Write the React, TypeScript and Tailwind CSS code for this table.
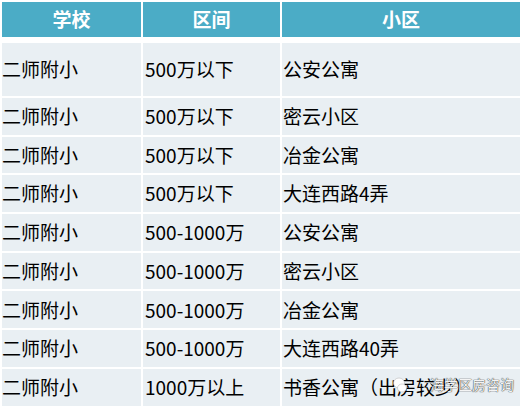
const rows: [string, string, string][] = [
  ["二师附小", "500万以下", "公安公寓"],
  ["二师附小", "500万以下", "密云小区"],
  ["二师附小", "500万以下", "冶金公寓"],
  ["二师附小", "500万以下", "大连西路4弄"],
  ["二师附小", "500-1000万", "公安公寓"],
  ["二师附小", "500-1000万", "密云小区"],
  ["二师附小", "500-1000万", "冶金公寓"],
  ["二师附小", "500-1000万", "大连西路40弄"],
  ["二师附小", "1000万以上", "书香公寓（出房较少）"],
];

const cols = "grid grid-cols-[139px_137px_238px] gap-x-[2px]";

export default function App() {
  return (
    <div
      className="relative h-[412px] w-[526px] overflow-hidden bg-white pl-[2px] pt-[2px] text-[19px] text-black"
      style={{ fontFamily: '"Noto Sans CJK SC", "Noto Sans", sans-serif' }}
    >
      {/* Header */}
      <div className={`${cols} h-[35px]`}>
        {["学校", "区间", "小区"].map((h) => (
          <div
            key={h}
            className="flex items-center justify-center bg-[#4bacc6] font-bold text-white"
          >
            {h}
          </div>
        ))}
      </div>

      {/* Body */}
      <div className="mt-[6px] flex flex-col gap-y-[2px]">
        {rows.map((r, i) => (
          <div
            key={i}
            className={`${cols} ${i === 0 ? "h-[53px]" : "h-[36.7px]"}`}
          >
            <div className="flex items-center bg-[#e9eff3]">{r[0]}</div>
            <div className="flex items-center bg-[#e9eff3] pl-[2px]">{r[1]}</div>
            <div className="flex items-center bg-[#e9eff3] pl-[1px]">{r[2]}</div>
          </div>
        ))}
      </div>

      {/* Watermark */}
      <div className="absolute left-[393px] top-[374px] flex items-center">
        <svg width="14" height="16" viewBox="0 0 14 16">
          <ellipse cx="6" cy="6" rx="5.5" ry="5" fill="#fff" stroke="#bbb" strokeWidth="0.6" />
          <ellipse cx="9" cy="11" rx="4.5" ry="4" fill="#fff" stroke="#bbb" strokeWidth="0.6" />
        </svg>
        <span
          className="ml-[23px] text-[14px] text-[#f4f4f4]"
          style={{ textShadow: "0 0 1px #333, 0 0 1px #333" }}
        >
          海学区房咨询
        </span>
      </div>
    </div>
  );
}
